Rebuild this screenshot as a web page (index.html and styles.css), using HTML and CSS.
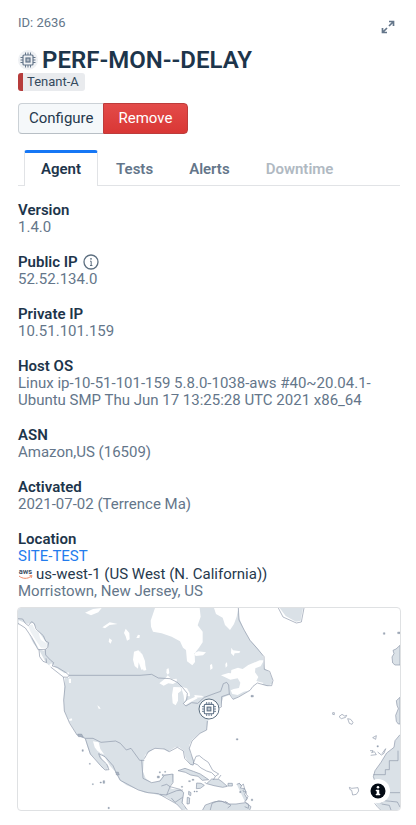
FILE: index.html
```html
<!DOCTYPE html>
<html lang="en">
<head>
<meta charset="utf-8">
<meta name="viewport" content="width=device-width, initial-scale=1">
<title>PERF-MON--DELAY</title>
<link rel="stylesheet" href="styles.css">
</head>
<body>
<svg class="defs" aria-hidden="true">
  <symbol id="chip" viewBox="0 0 16 16">
    <g fill="none" stroke="currentColor">
      <rect x="3" y="3" width="10" height="10" rx="1" stroke-width="1.2"/>
      <rect x="6" y="6" width="4" height="4" fill="currentColor" fill-opacity=".45" stroke-width="1.2"/>
      <path d="M5.5 0.5V3M8 0.5V3M10.500 .5V3M5.500 13v2.500M8 13v2.500M10.500 13v2.500M.5 5.500H3M.5 8H3M.5 10.500H3M13 5.500h2.500M13 8h2.500M13 10.500h2.500"/>
    </g>
  </symbol>
</svg>
<main class="panel">
  <header class="top">
    <span class="agent-id">ID: 2636</span>
    <button class="expand" type="button" aria-label="Expand">
      <svg viewBox="0 0 14 14" width="14" height="14"><path d="M8 6l4-4M8 1.500h4.500V6M6 8l-4 4M1.500 8v4.500H6" fill="none" stroke="currentColor" stroke-width="1.700"/></svg>
    </button>
  </header>
  <div class="heading">
    <span class="chip"><svg width="16" height="16"><use href="#chip"/></svg></span>
    <h1>PERF-MON--DELAY</h1>
  </div>
  <span class="tag">Tenant-A</span>
  <div class="actions">
    <button class="btn" type="button">Configure</button>
    <button class="btn danger" type="button">Remove</button>
  </div>
  <nav class="tabs" role="tablist">
    <button class="tab active" type="button" role="tab" aria-selected="true">Agent</button>
    <button class="tab" type="button" role="tab">Tests</button>
    <button class="tab" type="button" role="tab">Alerts</button>
    <button class="tab" type="button" role="tab" disabled>Downtime</button>
  </nav>
  <dl class="details">
    <div><dt>Version</dt><dd>1.4.0</dd></div>
    <div>
      <dt>Public IP
        <svg class="info" viewBox="0 0 16 16" width="16" height="16"><circle cx="8" cy="8" r="7" fill="none" stroke="currentColor" stroke-width="1.300"/><circle cx="8" cy="4.800" r=".9" fill="currentColor"/><path d="M7 7.200H8.200V11.500M7 11.500H9.400" fill="none" stroke="currentColor" stroke-width="1"/></svg>
      </dt>
      <dd>52.52.134.0</dd>
    </div>
    <div><dt>Private IP</dt><dd>10.51.101.159</dd></div>
    <div><dt>Host OS</dt><dd>Linux ip-10-51-101-159 5.8.0-1038-aws #40~20.04.1-Ubuntu SMP Thu Jun 17 13:25:28 UTC 2021 x86_64</dd></div>
    <div><dt>ASN</dt><dd>Amazon,US (16509)</dd></div>
    <div><dt>Activated</dt><dd>2021-07-02 (Terrence Ma)</dd></div>
    <div>
      <dt>Location</dt>
      <dd><a href="#site">SITE-TEST</a></dd>
      <dd class="region">
        <svg class="aws" viewBox="0 0 30 24" width="15" height="12"><text x="15" y="12" text-anchor="middle" class="aws-text">aws</text><path d="M2 16C9 22 19 22 26 17M23 15.500l5-.3-1.500 4.500" fill="none" stroke="#ee8a68" stroke-width="2"/></svg>
        us-west-1 (US West (N. California))
      </dd>
      <dd>Morristown, New Jersey, US</dd>
    </div>
  </dl>
  <figure class="map">
    <svg class="map-art" viewBox="24 24 1146 606" preserveAspectRatio="xMidYMid slice" role="img" aria-label="Map of agent location">
      <!-- North America -->
      <path class="land" d="M24 24H685L688 55 700 85 720 120 744 146 758 165 763 205 778 216 787 238 786 252 772 258 745 250 728 258 720 270 690 288 671 298 661 284 640 292 632 318 610 330 596 355 590 390 570 400 546 420 538 435 541 460 551 480 548 497 540 493 526 472 521 452 508 442 495 442 475 455 458 446 434 445 405 465 401 485 399 515 407 535 425 548 448 543 463 523 492 522 490 545 480 558 485 567 510 568 521 575 518 615 530 625 522 633 500 612 470 592 430 581 405 578 380 568 350 556 328 540 318 518 300 497 285 473 269 458 276 478 296 500 291 511 276 503 253 475 240 462 232 440 225 416 201 405 180 370 163 333 161 300 165 233 150 226 122 200 108 188 87 149 70 130 54 98 34 78 24 74Z"/>
      <g class="water">
        <path d="M435 24L422 62 423 80 429 95 455 100 485 110 510 124 519 143 528 150 531 184 547 196 555 186 554 160 567 143 578 127 578 95 563 76 572 50 569 24ZM612 24L618 42 638 53 645 75 660 90 672 72 680 50 685 24ZM225 38l24-11 26-3-10 13-22 9zM277 82l22-15 24 5-24 3-14 10zM347 86l11 13 1 19-8 4-4-13-5-10zM379 114l5-10 6 2-2 8zM298 115l8 6-4 10-6-6zM372 155l13-4 12 12 8 20 2 23-13 3-8-22-2 19-10-8-5-19zM448 250l17-14 8-10 12 12 15-2 1 9-12 7-14-2-14 7zM490 261l22 1 2 10-10 8 0 22-7 14-9-6-2-25zM513 260l18 5 8 14 1 10-8-1-9 18-2-19zM520 312l9-10 27-12 7 5-25 13-12 8zM553 285l22 2 8 5-28 1zM470 207l6-2 2 14-5 5-4-6zM552 160l13-6 23 3-9 9-22 2zM600 195l6-3 2 13-7 5zM646 192l5-6 1 12-5 5zM664 143l5 8 22 3-3 5-14 1-3 8-8-8zM633 226l22-7 8 1 1-10 20-7 14 4 17-12 34-14 13 0-10 18-16 6-1 12 10 14-6 12 22 6-15 12-24 10-21 4-18 10-16-3-5-11 9-4 16-3 4-16-8-13-22 4zM390 150l5 30 11 16 3 14-8 2-11-30zM262 316l6 4 4 6-6 0zM176 236h7v13h-6zM164 220l12-3 2 16-10 2-30-13-15-17-6-10 7-5 12 12zM177 358l8-3 2 6-8 2zM249 424l17 3 5 20 12 17-13-6-8-6-8-10z"/>
        <path d="M26 61l26 10 17-2 20 30 20 29 5 16-13 8-14-5-14-25-21-23-26-25z"/>
      </g>
      <path class="snow" d="M67 73l5 10 13 19 8 18 16 10 3 13-19 0-14-20-17-27-7-19zM75 90l10 4 5 20-7 8"/>
      <path class="coast" d="M24 56L38 57 45 69 55 77 65 65 73 71 78 87 100 107 107 123 116 128 113 143 106 148 107 165 122 181 131 188 127 198 142 202 160 213 168 218 177 226H390L425 223 445 234 480 236 502 247 518 263 532 280 530 300 520 311 528 318 545 308 563 310 583 292 615 280 632 274 640 251 650 247 656 255 658 282 669 298 686 291 720 271 729 259 742 249 771 257 785 257 789 241 779 214 763 208 762 170 743 147 720 121 703 91 687 60 685 24M24 70L46 84 65 112 84 149 106 148M87 149L89 170 99 184 110 188 108 175M122 201L160 231 173 232 177 226M160 231L165 260 161 300 163 333 179 370 201 405 226 415 249 415 273 427 317 423 331 430 349 450 363 445 389 481 403 481M395 480L399 535 425 548 450 543 463 526 488 522 489 548 480 560 510 568 521 578 516 608 532 630M403 476L415 455 435 445 463 447 478 455 502 442 520 453 524 475 541 493 550 495 551 485 538 445 546 423 570 400 590 390 592 363M610 330L634 321 635 290 658 282M226 416L241 462 272 497 285 510 297 509 290 492 270 473 266 461 285 470 309 497 319 519 331 541 385 570 414 578 445 581 500 612 521 634M454 558L470 553 480 560 470 585 450 583M470 584L500 572 519 570M484 594L495 607 518 592"/>
      <!-- Caribbean and South America -->
      <g class="island">
        <path d="M504 512l21-7 25 9 21 8 25 17-19 2-13-12-22-4-16-8zM590 551l15-14 21 1 10 7 16 14-14 3-26-5zM560 549l13 1 10 6-12 9-12 1zM654 550l13 0 0 8-13 0z"/>
        <path d="M576 633l10-18 28-10 22-1 17 8 25 0 28-4 17 12-5 13z"/>
        <path d="M536 574l7 4-1 9-6-3zM532 592l7 2-1 17-7 1zM680 553l8-3 7 7-4 7 13 2 4 9-4 8 7 12-6 10"/>
      </g>
      <path class="coast" d="M550 489L558 469 568 467 580 477 595 487 608 511 626 522 616 529 605 518 590 513 573 504 562 494ZM616 529L610 540M633 525L625 536M584 546L590 552M688 550l6 7 6-5 4 15-6 6M699 575l9 0 1 8 5 6-5 12M704 605l12 8-1 12-11-5M600 633l6-23 20-8 27 6M645 604l18 12-10 8"/>
      <g class="speck"><path d="M216 449h4v5h-4zM238 490h3v3h-3zM247 551h3v3h-3zM270 546h4v3h-4zM279 542h5v8h-5zM294 622h4v4h-4zM203 402h12l5 9-15-1zM317 516h8l3 9-9 0zM448 515h3v4h-3zM457 523h3v4h-3zM464 514h3v3h-3zM442 528h6v6h-6zM514 559h4v3h-4zM536 542h5v3h-5zM546 538h6v3h-6zM552 573h3v3h-3zM559 573h3v3h-3zM723 286h7v5h-7zM679 416h5v4h-5zM689 574h4v4h-4zM724 597h4v5h-4zM1120 98h5v5h-5zM1163 96h7v5h-7zM1101 437h4v4h-4z"/></g>
      <!-- Greenland, Atlantic islands, Europe and Africa -->
      <path class="land" d="M809 24h70l-7 38-14 3-31-17z"/>
      <path class="coast" d="M805 24l14 27 40 18 15-3 8-42"/>
      <path class="island" d="M1170 136l-12 11-9 4 3 10-6 10 2 18 7 6h15zM1170 292l-11 10 2 14 4 10-8 20 2 18 6 8h5z"/>
      <path class="land" d="M1170 404l-15 18-3 20-22 17-17 28-18 25-5 18 6 18 10 12-5 35-5 10 6 12 12 13h56z"/>
      <path class="coast" d="M1170 404l-15 18-3 20-22 17-17 28-18 25-5 18 6 18M1090 524h36v-15h12v-27h26v-30M1140 578h30M1094 610l8 10 10 10M1112 610l10-8 20 2 20 2 8 15M1115 612l23 4 5 14M968 338l5 0 0 6-5-1zM987 350l9-7 8 5 6-2-3 6-13 4zM1013 356l9 2 7 9-3 6-8-3zM1088 413l11-6-2 11zM1018 562l7 3 19-2 2 10-7 10-11 2-3-14-5-2zM1080 452l9 0-4 6 8-3 6 9-17 2M1103 456l11 9 8-5 5-14-11 15"/>
    </svg>
    <span class="pin"><svg width="15" height="15"><use href="#chip"/></svg></span>
    <button class="credits" type="button" aria-label="Map information"><svg viewBox="0 0 16 16" width="16" height="16"><circle cx="8" cy="8" r="7.500" fill="#030a14"/><circle cx="8" cy="4.300" r="1.300" fill="#fff"/><path d="M6 7h3v4h1v1H6v-1h1V8H6z" fill="#fff" stroke="#fff" stroke-width=".5"/></svg></button>
  </figure>
</main>
</body>
</html>
```
FILE: styles.css
```css
* {
  box-sizing: border-box;
}

body {
  margin: 0;
  background: #fff;
  color: #64768a;
  font-family: Roboto, Inter, sans-serif;
  font-size: 15px;
  line-height: 17px;
}

button {
  font: inherit;
  color: inherit;
  cursor: pointer;
}

svg {
  display: block;
}

.defs {
  position: absolute;
  width: 0;
  height: 0;
}

.panel {
  padding: 14px 16px 14px 18px;
}

.top {
  display: flex;
  justify-content: space-between;
  height: 33px;
}

.agent-id {
  font-size: 13px;
  line-height: 18px;
}

.expand {
  align-self: flex-start;
  margin: 6px 5px 0 0;
  padding: 0;
  border: 0;
  background: none;
}

.heading {
  display: flex;
  align-items: center;
  gap: 4px;
}

.chip {
  display: grid;
  place-items: center;
  width: 20px;
  height: 20px;
  border-radius: 50%;
  background: #eff1f4;
}

h1 {
  margin: 0;
  color: #1d354b;
  font-size: 24px;
  font-weight: 600;
  line-height: 26px;
}

.tag {
  display: block;
  width: fit-content;
  padding: 0 6px 0 4px;
  border-left: 5px solid #b63c3b;
  border-radius: 3px;
  background: #e9ebee;
  color: #34495d;
  font-size: 13px;
  line-height: 18px;
}

.actions {
  display: flex;
  margin-top: 12px;
}

.btn {
  height: 31px;
  padding: 0 9px 0 10px;
  border: 1px solid #cbd1d6;
  border-right: 0;
  border-bottom-color: #b8bfc5;
  border-radius: 4px 0 0 4px;
  background: #f5f8fa;
  color: #26394d;
}

.btn.danger {
  padding: 0 15px;
  border: 1px solid #bd3c3b;
  border-radius: 0 4px 4px 0;
  background: linear-gradient(#e34b49, #d93735);
  color: #fff;
}

.tabs {
  display: flex;
  height: 36px;
  margin-top: 16px;
  padding-left: 6px;
  border-bottom: 1px solid #e1e3e6;
}

.tab {
  height: 36px;
  padding: 2px 18px 0;
  border: 0;
  background: none;
  font-weight: 600;
}

.tab.active {
  padding: 0 16px;
  border: 1px solid #e1e3e6;
  border-top: 3px solid #1677f5;
  border-bottom: 0;
  border-radius: 3px 3px 0 0;
  background: #fff;
  color: #1d354b;
}

.tab:disabled {
  color: #b0b9c2;
}

.details {
  display: flex;
  flex-direction: column;
  gap: 17px;
  margin: 15px 0 7px;
}

dt {
  display: flex;
  align-items: center;
  gap: 5px;
  height: 18px;
  color: #1d354b;
  font-weight: 600;
}

dd {
  margin: 0;
}

.info {
  color: #5d6f80;
}

a {
  color: #237ced;
  text-decoration: none;
}

.region {
  display: flex;
  align-items: center;
  gap: 3px;
  height: 18px;
  color: #26394d;
}

.aws-text {
  fill: #34495d;
  font-size: 15px;
  font-weight: 600;
}

.map {
  position: relative;
  margin: 0 -1px;
  overflow: hidden;
  border: 1px solid #dfe1e3;
  border-radius: 4px;
}

.map-art {
  width: 100%;
}

.land {
  fill: #dae1e7;
}

.water {
  fill: #fff;
}

.snow {
  fill: #edf1f4;
}

.coast {
  fill: none;
  stroke: #8c97a9;
  stroke-width: 2;
  stroke-linejoin: round;
}

.island {
  fill: #dae1e7;
  stroke: #8c97a9;
  stroke-width: 2;
}

.speck {
  fill: #a8b2c0;
  stroke: #7f8b9e;
  stroke-width: 1;
}

.pin {
  position: absolute;
  top: 50%;
  left: 50%;
  display: grid;
  place-items: center;
  width: 21px;
  height: 21px;
  border: 1px solid #5d6f80;
  border-radius: 50%;
  background: #fff;
  transform: translate(-50%, -50%);
}

.credits {
  position: absolute;
  right: 10px;
  bottom: 7px;
  display: grid;
  place-items: center;
  width: 24px;
  height: 24px;
  padding: 0;
  border: 0;
  border-radius: 50%;
  background: #fff;
}
```
